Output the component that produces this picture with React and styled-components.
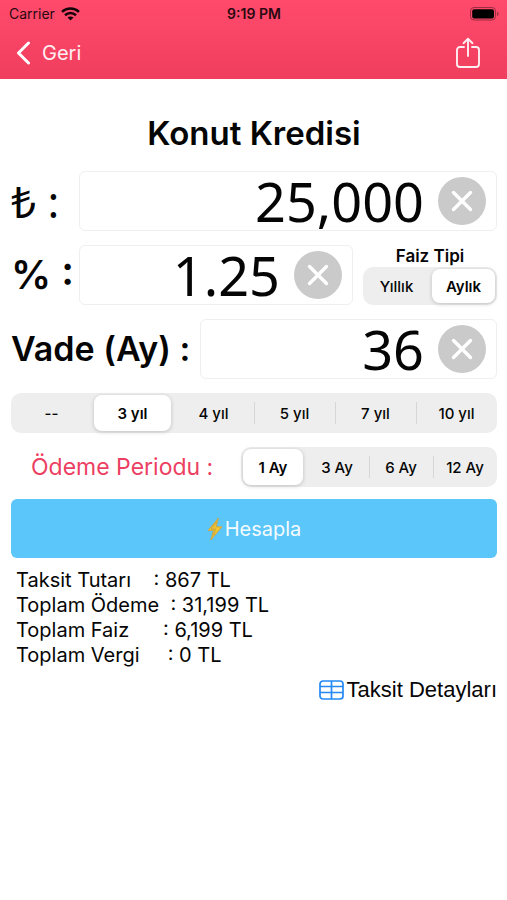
import React, { useState } from "react";
import styled, { createGlobalStyle } from "styled-components";

const GlobalStyle = createGlobalStyle`
  *, *::before, *::after { box-sizing: border-box; }
  body {
    margin: 0;
    background: #fff;
    color: #050505;
    font-family: Inter, "Liberation Sans", sans-serif;
  }
  button, input { font: inherit; color: inherit; }
`;

const Header = styled.header`
  background: linear-gradient(#ff4a6c, #f03e5e);
`;

const StatusBar = styled.div`
  display: grid;
  grid-template-columns: 1fr auto 1fr;
  align-items: center;
  height: 27px;
  padding: 0 8px 0 9px;
  font-size: 14px;
  color: #2a0910;
`;

const Carrier = styled.span`
  display: flex;
  align-items: center;
  gap: 6px;
`;

const Clock = styled.time`
  font-weight: 600;
`;

const BatteryIcon = styled.svg`
  justify-self: end;
`;

const NavBar = styled.nav`
  display: flex;
  align-items: center;
  justify-content: space-between;
  height: 52px;
  padding: 0 26px 0 16px;
  color: #ffeef1;
`;

const NavButton = styled.button`
  display: flex;
  align-items: center;
  gap: 11px;
  padding: 0;
  border: 0;
  background: none;
  font-size: 20px;
  cursor: pointer;
`;

const Main = styled.main`
  display: flex;
  flex-direction: column;
  padding: 32px 10px 24px 11px;
`;

const Title = styled.h1`
  margin: 0 0 16px;
  font-size: 33px;
  line-height: 44px;
  font-weight: 600;
  text-align: center;
`;

const Form = styled.form`
  display: flex;
  flex-direction: column;
`;

const Row = styled.div`
  display: flex;
  align-items: center;
  gap: 10px;
  margin-bottom: 14px;
`;

const FieldLabel = styled.label`
  flex: none;
  width: ${(p) => (p.$symbol ? "58px" : "auto")};
  min-width: ${(p) => (p.$symbol ? "0" : "178px")};
  font-size: ${(p) => (p.$symbol ? "40px" : "34px")};
  line-height: 48px;
  font-weight: 600;
  white-space: nowrap;
`;

const LiraLabel = styled(FieldLabel)`
  font-family: "Noto Sans", sans-serif;
  font-size: 44px;
  font-weight: 400;
`;

const Field = styled.div`
  display: flex;
  flex: 1;
  align-items: center;
  gap: 14px;
  min-width: 0;
  height: 60px;
  padding: 0 10px;
  border: 1px solid #efefef;
  border-radius: 6px;
`;

const NumberInput = styled.input`
  flex: 1;
  min-width: 0;
  width: 0;
  height: 58px;
  padding: 0;
  border: 0;
  outline: 0;
  background: none;
  font-family: "Noto Sans", sans-serif;
  font-size: 54px;
  line-height: 58px;
  text-align: right;
`;

const ClearButton = styled.button`
  display: flex;
  flex: none;
  align-items: center;
  justify-content: center;
  width: 48px;
  height: 48px;
  padding: 0;
  border: 0;
  border-radius: 50%;
  background: #cacaca;
  cursor: pointer;
`;

const RateType = styled.fieldset`
  flex: none;
  width: 134px;
  margin: 0;
  padding: 0;
  border: 0;
  text-align: center;
`;

const RateCaption = styled.div`
  font-size: 17px;
  line-height: 22px;
  font-weight: 600;
`;

const SegmentTrack = styled.div`
  display: flex;
  flex: 1;
  height: ${(p) => (p.$compact ? "38px" : "40px")};
  border-radius: 10px;
  background: #eee;
`;

const Segment = styled.label`
  display: flex;
  flex: 1 1 0;
  align-items: center;
  justify-content: center;
  position: relative;
  margin: 2px;
  border-radius: 8px;
  font-size: 15px;
  font-weight: ${(p) => (p.$active ? 600 : 500)};
  white-space: nowrap;
  cursor: pointer;
  background: ${(p) => (p.$active ? "#fff" : "transparent")};
  box-shadow: ${(p) => (p.$active ? "0 1px 4px rgba(0, 0, 0, 0.2)" : "none")};

  &::before {
    content: "";
    display: ${(p) => (p.$divided ? "block" : "none")};
    position: absolute;
    left: -2px;
    top: 7px;
    bottom: 7px;
    width: 1px;
    background: #d6d6d6;
  }
`;

const SegmentRadio = styled.input`
  position: absolute;
  inset: 0;
  margin: 0;
  opacity: 0;
  cursor: pointer;
`;

const PeriodRow = styled(Row)`
  gap: 0;
  margin-bottom: 12px;
`;

const PeriodLabel = styled.div`
  flex: none;
  width: 230px;
  padding-left: 20px;
  font-size: 23px;
  color: #ec3f62;
`;

const CalculateButton = styled.button`
  display: flex;
  align-items: center;
  justify-content: center;
  gap: 2px;
  height: 59px;
  border: 0;
  border-radius: 6px;
  background: #5bc6f9;
  font-size: 20px;
  color: #f4fbff;
  cursor: pointer;
`;

const Results = styled.output`
  display: block;
  margin-top: 10px;
  padding-left: 5px;
`;

const ResultLine = styled.div`
  font-size: 20px;
  line-height: 25px;
  white-space: pre;
`;

const DetailsLink = styled.a`
  display: flex;
  align-items: center;
  align-self: flex-end;
  gap: 3px;
  margin-top: 9px;
  font-family: "Liberation Sans", sans-serif;
  font-size: 22px;
  line-height: 26px;
  color: inherit;
  text-decoration: none;
`;

function Segments({ name, label, options, initial, compact }) {
  const [selected, setSelected] = useState(initial);
  return (
    <SegmentTrack role="radiogroup" aria-label={label} $compact={compact}>
      {options.map((option, i) => (
        <Segment
          key={option}
          $active={i === selected}
          $divided={i > 0 && i !== selected && i !== selected + 1}
        >
          <SegmentRadio
            type="radio"
            name={name}
            checked={i === selected}
            onChange={() => setSelected(i)}
          />
          {option}
        </Segment>
      ))}
    </SegmentTrack>
  );
}

function NumberField({ id, initial }) {
  const [value, setValue] = useState(initial);
  return (
    <Field>
      <NumberInput
        id={id}
        type="text"
        inputMode="decimal"
        value={value}
        onChange={(e) => setValue(e.target.value)}
      />
      <ClearButton type="button" aria-label="Temizle" onClick={() => setValue("")}>
        <svg width="22" height="22" viewBox="0 0 22 22" fill="none" stroke="#fff" strokeWidth="3.4" strokeLinecap="round">
          <path d="M2.5 2.5l17 17M19.5 2.5l-17 17" />
        </svg>
      </ClearButton>
    </Field>
  );
}

const results = [
  "Taksit Tutarı    : 867 TL",
  "Toplam Ödeme  : 31,199 TL",
  "Toplam Faiz      : 6,199 TL",
  "Toplam Vergi     : 0 TL",
];

export default function App() {
  return (
    <>
      <GlobalStyle />
      <Header>
        <StatusBar>
          <Carrier>
            Carrier
            <svg width="19" height="14" viewBox="0 0 19 14" fill="none" stroke="#12040a" strokeWidth="2.5">
              <path d="M1 4.9C5.8.4 13.2.4 18 4.9" />
              <path d="M4 8.2c3.2-2.9 7.8-2.9 11 0" />
              <path d="M9.5 13.6L6.5 10.6c1.7-1.5 4.3-1.5 6 0z" fill="#12040a" stroke="none" />
            </svg>
          </Carrier>
          <Clock>9:19 PM</Clock>
          <BatteryIcon width="29" height="14" viewBox="0 0 29 14">
            <rect x="0.5" y="0.5" width="25" height="12.5" rx="3.5" fill="none" stroke="#9c2d42" />
            <rect x="2.2" y="2.2" width="21.8" height="9.2" rx="2" fill="#000" />
            <path d="M27 4.7c2 .6 2 3.6 0 4.2z" fill="#9c2d42" />
          </BatteryIcon>
        </StatusBar>
        <NavBar>
          <NavButton type="button">
            <svg width="15" height="24" viewBox="0 0 15 24" fill="none" stroke="#fff" strokeWidth="3" strokeLinecap="round" strokeLinejoin="round">
              <path d="M12.5 2L2.5 12l10 10" />
            </svg>
            Geri
          </NavButton>
          <NavButton type="button" aria-label="Paylaş">
            <svg width="26" height="32" viewBox="0 0 26 32" fill="none" stroke="#ffeef1" strokeWidth="1.9" strokeLinecap="round" strokeLinejoin="round">
              <path d="M9 10H5a3 3 0 0 0-3 3v14a3 3 0 0 0 3 3h16a3 3 0 0 0 3-3V13a3 3 0 0 0-3-3h-4" />
              <path d="M13 19V2M8.5 6.2L13 1.8l4.5 4.4" />
            </svg>
          </NavButton>
        </NavBar>
      </Header>
      <Main>
        <Title>Konut Kredisi</Title>
        <Form onSubmit={(e) => e.preventDefault()}>
          <Row>
            <LiraLabel $symbol htmlFor="amount">₺ :</LiraLabel>
            <NumberField id="amount" initial="25,000" />
          </Row>
          <Row>
            <FieldLabel $symbol htmlFor="rate">% :</FieldLabel>
            <NumberField id="rate" initial="1.25" />
            <RateType>
              <RateCaption>Faiz Tipi</RateCaption>
              <Segments compact name="rateType" label="Faiz Tipi" options={["Yıllık", "Aylık"]} initial={1} />
            </RateType>
          </Row>
          <Row>
            <FieldLabel htmlFor="term">Vade (Ay) :</FieldLabel>
            <NumberField id="term" initial="36" />
          </Row>
          <Row>
            <Segments name="years" label="Vade" options={["--", "3 yıl", "4 yıl", "5 yıl", "7 yıl", "10 yıl"]} initial={1} />
          </Row>
          <PeriodRow>
            <PeriodLabel>Ödeme Periodu :</PeriodLabel>
            <Segments name="period" label="Ödeme Periodu" options={["1 Ay", "3 Ay", "6 Ay", "12 Ay"]} initial={0} />
          </PeriodRow>
          <CalculateButton type="submit">
            <svg width="16" height="24" viewBox="0 0 16 24">
              <path d="M11.5 1L1 13.5h5.5L3.8 23 15 9.8H9z" fill="#f3c52c" stroke="#c9a649" strokeWidth="1" strokeLinejoin="round" />
              <path d="M10 4.5L4 12h4.5L6.5 18.5" fill="none" stroke="#b69a4d" strokeWidth="0.8" />
            </svg>
            Hesapla
          </CalculateButton>
        </Form>
        <Results>
          {results.map((line) => (
            <ResultLine key={line}>{line}</ResultLine>
          ))}
        </Results>
        <DetailsLink href="#taksitler">
          <svg width="25" height="20" viewBox="0 0 25 20" fill="none" stroke="#2589f5" strokeWidth="1.7">
            <rect x="1" y="1" width="23" height="18" rx="3" />
            <path d="M1 6.5h23M1 12.5h23M12.5 1v18" />
          </svg>
          Taksit Detayları
        </DetailsLink>
      </Main>
    </>
  );
}
